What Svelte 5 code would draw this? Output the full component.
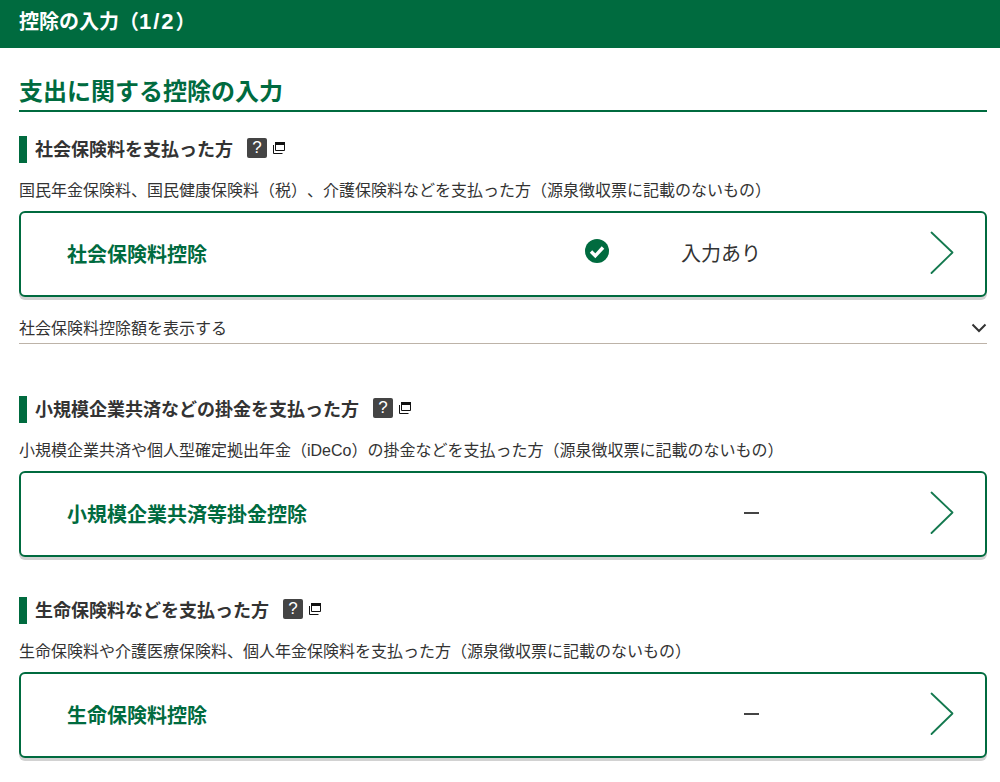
<script>
  const sections = [
    { heading: '社会保険料を支払った方', desc: '国民年金保険料、国民健康保険料（税）、介護保険料などを支払った方（源泉徴収票に記載のないもの）', label: '社会保険料控除', done: true, more: '社会保険料控除額を表示する' },
    { heading: '小規模企業共済などの掛金を支払った方', desc: '小規模企業共済や個人型確定拠出年金（iDeCo）の掛金などを支払った方（源泉徴収票に記載のないもの）', label: '小規模企業共済等掛金控除', done: false },
    { heading: '生命保険料などを支払った方', desc: '生命保険料や介護医療保険料、個人年金保険料を支払った方（源泉徴収票に記載のないもの）', label: '生命保険料控除', done: false }
  ];
</script>

<header class="topbar"><h1>控除の入力（<span class="count">1/2</span>）</h1></header>

<main class="page">
  <h2 class="title">支出に関する控除の入力</h2>

  {#each sections as s}
    <section class="section">
      <div class="heading">
        <h3>{s.heading}</h3>
        <span class="help">?</span>
        <svg class="window" width="12" height="12" viewBox="0 0 12 12" aria-hidden="true">
          <path d="M2.500 .5h9v8h-9z" fill="#fff" stroke="#111" stroke-width="1"/>
          <path d="M2 0h10v3H2z" fill="#111"/>
          <path d="M.5 3v8.500h9" fill="none" stroke="#111" stroke-width="1"/>
        </svg>
      </div>
      <p class="desc">{s.desc}</p>
      <a class="card" href="#top">
        <span class="label">{s.label}</span>
        {#if s.done}
          <span class="status">
            <svg class="check" width="24" height="24" viewBox="0 0 24 24" aria-hidden="true">
              <circle cx="12" cy="12" r="12" fill="#006b3f"/>
              <path d="M6 12.500l4.300 4.300 7.700-8.300" fill="none" stroke="#fff" stroke-width="3.400"/>
            </svg>
            <span class="done-text">入力あり</span>
          </span>
        {:else}
          <span class="status"><span class="dash"></span></span>
        {/if}
        <svg class="arrow" width="25" height="44" viewBox="0 0 25 44" aria-hidden="true">
          <path d="M1.500 1.500L22.500 21.500 1.500 42" fill="none" stroke="#14794f" stroke-width="1.800" stroke-linecap="round" stroke-linejoin="round"/>
        </svg>
      </a>
      {#if s.more}
        <div class="more">
          <span>{s.more}</span>
          <svg width="16" height="10" viewBox="0 0 16 10" aria-hidden="true">
            <path d="M1.500 1.500L8 8l6.500-6.500" fill="none" stroke="#333" stroke-width="2"/>
          </svg>
        </div>
      {/if}
    </section>
  {/each}
</main>

<style>
  :global(body) {
    margin: 0;
    background: #fff;
    color: #333;
    font-family: "Liberation Sans", "Noto Sans CJK JP", sans-serif;
    text-spacing-trim: space-all;
  }
  .topbar {
    height: 48px;
    background: #006b3f;
    display: flex;
    align-items: center;
    padding-left: 19px;
  }
  h1 {
    margin: 0 0 4px;
    color: #fff;
    font-size: 20px;
    line-height: 28px;
    font-weight: 700;
  }
  .count {
    font-size: 22px;
    letter-spacing: 2px;
  }
  .page {
    padding: 26px 13px 0 19px;
    height: 708px;
    overflow: hidden;
  }
  .title {
    margin: 0 0 24px;
    height: 36px;
    line-height: 36px;
    font-size: 24px;
    font-weight: 700;
    color: #006b3f;
    border-bottom: 2px solid #006b3f;
  }
  .section { margin-bottom: 40px; }
  .section:has(.more) { margin-bottom: 52px; }
  .heading {
    display: flex;
    align-items: center;
    height: 27px;
    border-left: 8px solid #006b3f;
    padding-left: 8px;
  }
  h3 {
    margin: 2px 0 0;
    font-size: 18px;
    line-height: 25px;
    font-weight: 700;
    color: #333;
  }
  .help {
    width: 20px;
    height: 20px;
    margin: 0 0 3px 14px;
    background: #444;
    color: #fff;
    border-radius: 2px;
    font-size: 17px;
    line-height: 20px;
    text-align: center;
  }
  .window { margin-left: 6px; margin-bottom: 3px; }
  .desc {
    margin: 15px 0 7px;
    font-size: 16px;
    line-height: 26px;
    color: #333;
    white-space: nowrap;
  }
  .card {
    display: flex;
    align-items: center;
    box-sizing: border-box;
    height: 86px;
    border: 2px solid #006b3f;
    border-radius: 6px;
    box-shadow: 0 3px 0 #d2d2d2;
    background: #fff;
    padding-left: 46px;
    text-decoration: none;
  }
  .label {
    width: 518px;
    flex: none;
    padding-bottom: 2px;
    font-size: 20px;
    font-weight: 700;
    color: #006b3f;
  }
  .status {
    width: 345px;
    flex: none;
    display: flex;
    align-items: center;
    height: 30px;
    margin-top: -2px;
  }
  .check { flex: none; margin-bottom: 4px; }
  .done-text {
    margin: 2px 0 0 72px;
    font-size: 20px;
    color: #333;
    line-height: 30px;
  }
  .dash {
    width: 15px;
    height: 2px;
    margin-left: 159px;
    background: #444;
  }
  .arrow { flex: none; margin-top: -3px; }
  .more {
    margin-top: 16px;
    height: 30px;
    display: flex;
    align-items: center;
    justify-content: space-between;
    border-bottom: 1px solid #bdb3a8;
    font-size: 16px;
  }
  .more span { margin-bottom: 2px; }
</style>
